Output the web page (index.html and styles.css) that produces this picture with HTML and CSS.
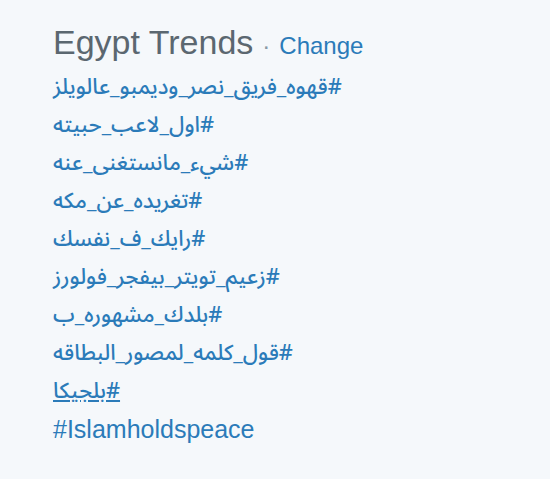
FILE: index.html
```html
<!DOCTYPE html>
<html>
<head>
<meta charset="utf-8">
<link rel="stylesheet" href="styles.css">
</head>
<body>
<div class="trends">
  <div class="header">
    <h3 class="title">Egypt Trends</h3>
    <span class="dot">·</span>
    <a class="change" href="#">Change</a>
  </div>
  <ul class="list">
    <li><a href="#" dir="rtl" class="ar">#قهوه_فريق_نصر_وديمبو_عالويلز</a></li>
    <li><a href="#" dir="rtl" class="ar">#اول_لاعب_حبيته</a></li>
    <li><a href="#" dir="rtl" class="ar">#شيء_مانستغنى_عنه</a></li>
    <li><a href="#" dir="rtl" class="ar">#تغريده_عن_مكه</a></li>
    <li><a href="#" dir="rtl" class="ar">#رايك_ف_نفسك</a></li>
    <li><a href="#" dir="rtl" class="ar">#زعيم_تويتر_بيفجر_فولورز</a></li>
    <li><a href="#" dir="rtl" class="ar">#بلدك_مشهوره_ب</a></li>
    <li><a href="#" dir="rtl" class="ar">#قول_كلمه_لمصور_البطاقه</a></li>
    <li><a href="#" dir="rtl" class="ar hover">#بلجيكا</a></li>
    <li><a href="#">#Islamholdspeace</a></li>
  </ul>
</div>
</body>
</html>
```
FILE: styles.css
```css
html, body {
  margin: 0;
  padding: 0;
  background: #f5f8fb;
}
body {
  font-family: "Liberation Sans", "DejaVu Sans", Arial, sans-serif;
}
.trends {
  padding: 22px 0 0 53px;
}
.header {
  display: flex;
  align-items: baseline;
  gap: 9px;
  height: 46px;
}
.title {
  margin: 0;
  font-size: 34px;
  font-weight: normal;
  color: #5b6770;
  line-height: 40px;
}
.dot {
  color: #8899a6;
  font-size: 24px;
}
.change {
  color: #2b7bb9;
  font-size: 24px;
  text-decoration: none;
}
.list {
  list-style: none;
  margin: 0;
  padding: 0;
}
.list li {
  height: 38px;
  line-height: 38px;
}
.list a {
  font-size: 25px;
  color: #2b7bb9;
  text-decoration: none;
}
.list a.ar {
  font-family: "Noto Sans Arabic", "Noto Naskh Arabic", "DejaVu Sans", sans-serif;
  font-size: 21.8px;
  font-weight: 500;
}
.list a.hover {
  text-decoration: underline;
}
```
